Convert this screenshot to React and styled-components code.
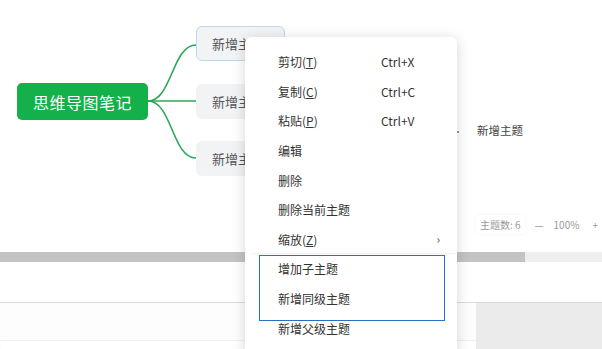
import React from "react";
import styled, { createGlobalStyle } from "styled-components";

const Global = createGlobalStyle`
  html, body { margin: 0; padding: 0; background: #fff; }
  body { font-family: "Noto Sans CJK SC", "Microsoft YaHei", "Noto Sans", sans-serif; }
`;

const Page = styled.div`
  position: relative;
  width: 602px;
  height: 349px;
  overflow: hidden;
  display: flex;
  flex-direction: column;
  background: #fff;
`;

const Canvas = styled.div`
  position: relative;
  height: 252px;
  flex: none;
`;

const Links = styled.svg`
  position: absolute;
  left: 0;
  top: 0;
`;

const RootNode = styled.div`
  position: absolute;
  left: 17px;
  top: 83px;
  width: 131px;
  height: 37px;
  border-radius: 5px;
  background: #14b14b;
  color: #fff;
  font-size: 16px;
  display: flex;
  align-items: center;
  justify-content: center;
  letter-spacing: 0.5px;
`;

const TopicNode = styled.div`
  position: absolute;
  left: 196px;
  top: ${(p) => p.$top}px;
  width: 89px;
  height: 35px;
  box-sizing: border-box;
  border-radius: 6px;
  background: #f2f3f5;
  border: 1px solid ${(p) => (p.$selected ? "#bcd9ef" : "transparent")};
  color: #555;
  font-size: 13px;
  display: flex;
  align-items: center;
  padding-left: 15px;
`;

const LeafNode = styled.div`
  position: absolute;
  left: 477px;
  top: 122px;
  font-size: 11.5px;
  color: #444;
`;

const Status = styled.div`
  position: absolute;
  left: 476px;
  top: 215px;
  display: flex;
  align-items: center;
  gap: 10px;
  font-size: 10px;
  color: #9a9a9a;
  height: 18px;
`;

const Chip = styled.span`
  background: #fff;
  box-shadow: 0 0 3px rgba(0, 0, 0, 0.06);
  padding: 2px 4px;
  border-radius: 3px;
`;

const Scrollbar = styled.div`
  height: 10px;
  flex: none;
  background: #efefef;
  display: flex;
`;

const Thumb = styled.div`
  width: 525px;
  background: #c3c3c3;
`;

const Gap = styled.div`
  height: 40px;
  flex: none;
  background: #fff;
`;

const Lower = styled.div`
  flex: 1;
  display: flex;
  border-top: 1px solid #dcdcdc;
  box-shadow: inset 0 3px 4px -2px rgba(0, 0, 0, 0.08);
`;

const LowerMain = styled.div`
  flex: 1;
  background: #fdfdfd;
  border-bottom: 1px solid #f0f0f0;
  height: 37px;
`;

const LowerSide = styled.div`
  width: 126px;
  background: #ebebeb;
`;

const Menu = styled.div`
  position: absolute;
  left: 245px;
  top: 37px;
  width: 212px;
  height: 330px;
  box-sizing: border-box;
  padding-top: 10px;
  background: #fff;
  border-radius: 6px;
  box-shadow: 0 2px 14px rgba(0, 0, 0, 0.16);
`;

const Item = styled.div`
  height: 29.6px;
  display: flex;
  align-items: center;
  padding-left: 33px;
  font-size: 12px;
  color: #333;
  position: relative;
`;

const Label = styled.span`
  width: 103px;
  flex: none;
  u { text-underline-offset: 1px; }
`;

const Shortcut = styled.span`
  color: #333;
  font-size: 12px;
`;

const Arrow = styled.span`
  position: absolute;
  right: 17px;
  top: 50%;
  transform: translateY(-55%);
  font-size: 12px;
  color: #555;
`;

const Separator = styled.div`
  height: 1px;
  margin: 0 0 0 6px;
  background: #f2f2f2;
  margin-top: -1px;
`;

const Highlight = styled.div`
  position: absolute;
  left: 14px;
  top: 218px;
  width: 186px;
  height: 66px;
  box-sizing: border-box;
  border: 1.5px solid #2b6fc4;
`;

const items = [
  { label: <>剪切(<u>T</u>)</>, key: "Ctrl+X" },
  { label: <>复制(<u>C</u>)</>, key: "Ctrl+C" },
  { label: <>粘贴(<u>P</u>)</>, key: "Ctrl+V" },
  { label: "编辑" },
  { label: "删除" },
  { label: "删除当前主题" },
  { label: <>缩放(<u>Z</u>)</>, arrow: true },
];

const items2 = ["增加子主题", "新增同级主题", "新增父级主题"];

export default function App() {
  return (
    <>
      <Global />
      <Page>
        <Canvas>
          <Links width="602" height="252">
            <g fill="none" stroke="#2aa858" strokeWidth="1.6">
              <path d="M148 101 C 172 101, 172 45, 196 45" />
              <path d="M148 101 L 196 101" />
              <path d="M148 101 C 172 101, 172 158, 196 158" />
            </g>
            <circle cx="458" cy="132" r="1" fill="#777" />
          </Links>
          <RootNode>思维导图笔记</RootNode>
          <TopicNode $top={26} $selected>新增主题</TopicNode>
          <TopicNode $top={84}>新增主题</TopicNode>
          <TopicNode $top={141}>新增主题</TopicNode>
          <LeafNode>新增主题</LeafNode>
          <Status>
            <Chip>主题数: 6</Chip>
            <span>—</span>
            <span>100%</span>
            <span style={{ marginLeft: 3 }}>+</span>
          </Status>
        </Canvas>
        <Scrollbar>
          <Thumb />
        </Scrollbar>
        <Gap />
        <Lower>
          <LowerMain />
          <LowerSide />
        </Lower>
        <Menu>
          {items.map((it, i) => (
            <Item key={i}>
              <Label>{it.label}</Label>
              {it.key && <Shortcut>{it.key}</Shortcut>}
              {it.arrow && <Arrow>›</Arrow>}
            </Item>
          ))}
          <Separator />
          {items2.map((t) => (
            <Item key={t}>
              <Label>{t}</Label>
            </Item>
          ))}
          <Highlight />
        </Menu>
      </Page>
    </>
  );
}
